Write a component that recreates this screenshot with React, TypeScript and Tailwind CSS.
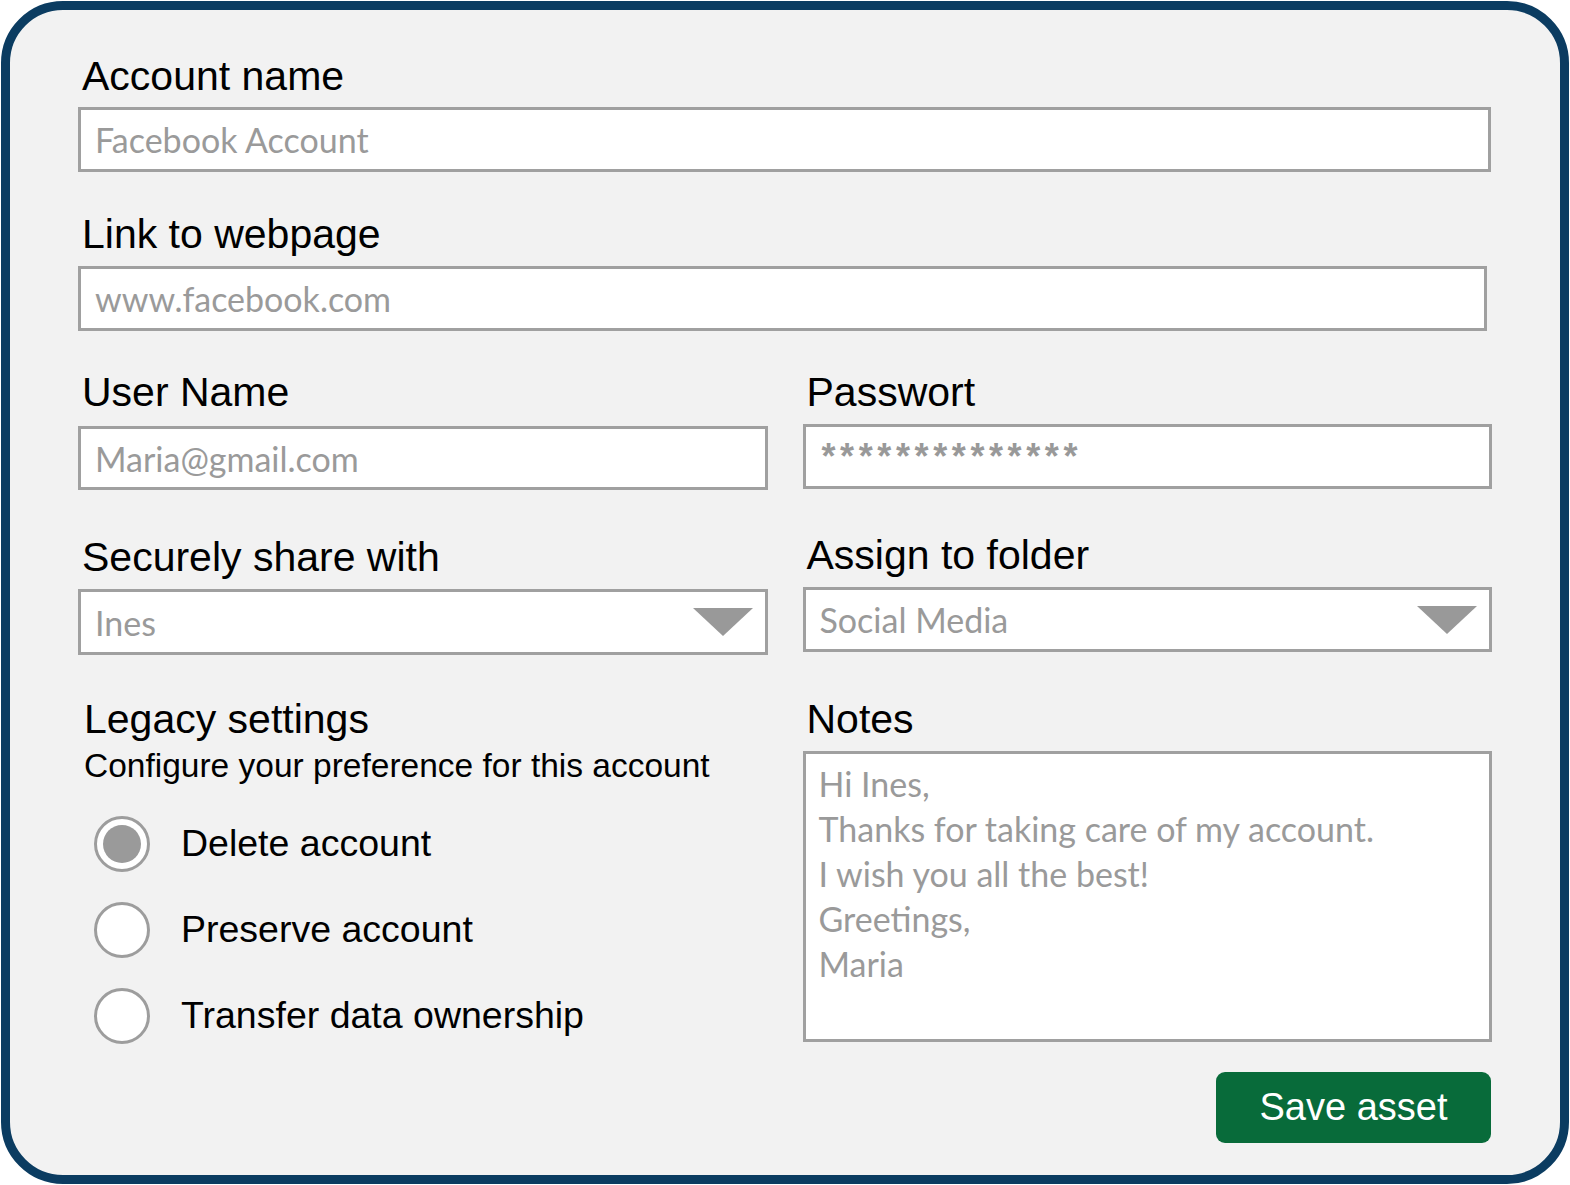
import React from "react";

const label = "block pl-[4px] text-[41px] leading-none text-black font-['Liberation_Sans',Arial,sans-serif]";
const box = "flex items-center border-[3px] border-[#a0a0a0] bg-white px-[14px] text-[34px] text-[#9a9a9a] font-['Lato','Noto_Sans',sans-serif]";

function Field({ title, value, className = "", boxClass = "" }: any) {
  return (
    <div className={className}>
      <span className={label}>{title}</span>
      <div className={`${box} ${boxClass}`}>{value}</div>
    </div>
  );
}

function Select({ title, value, className = "", boxClass = "" }: any) {
  return (
    <div className={className}>
      <span className={label}>{title}</span>
      <div className={`${box} justify-between pr-[12px] ${boxClass}`}>
        <span>{value}</span>
        <svg width="60" height="28" viewBox="0 0 60 28">
          <polygon points="0,0 60,0 30,28" fill="#999999" />
        </svg>
      </div>
    </div>
  );
}

function Radio({ text, checked = false }: any) {
  return (
    <div className="flex items-center gap-[31px] h-[56px]">
      <div className="w-[56px] h-[56px] rounded-full border-[3px] border-[#9d9d9d] bg-white flex items-center justify-center">
        {checked && <div className="w-[38px] h-[38px] rounded-full bg-[#9a9a9a]" />}
      </div>
      <span className="text-[37.5px] leading-none text-black font-['Liberation_Sans',Arial,sans-serif]">{text}</span>
    </div>
  );
}

export default function App() {
  const notes = ["Hi Ines,", "Thanks for taking care of my account.", "I wish you all the best!", "Greetings,", "Maria"];
  return (
    <div className="w-[1570px] h-[1185px] bg-white p-[1px]">
      <div className="w-[1568px] h-[1183px] rounded-[62px] border-[9px] border-[#0b3c61] bg-[#f2f2f2] pl-[68px] pr-[68px] pt-[46px]">
        <Field title="Account name" value="Facebook Account" boxClass="mt-[10px] h-[65px] w-[1413px]" />
        <Field title="Link to webpage" value="www.facebook.com" className="mt-[42px]" boxClass="mt-[11px] h-[65px] w-[1409px]" />

        <div className="mt-[41px] grid grid-cols-2 gap-[35px]">
          <Field title="User Name" value="Maria@gmail.com" boxClass="mt-[13px] h-[64px]" />
          <div>
            <span className={label}>Passwort</span>
            <div className="mt-[11px] h-[65px] border-[3px] border-[#a0a0a0] bg-white pl-[16px] pt-[12px] text-[36px] leading-none font-bold tracking-[4.6px] text-[#999999] font-['Liberation_Sans',Arial,sans-serif]">
              **************
            </div>
          </div>
        </div>

        <div className="mt-[47px] grid grid-cols-2 gap-[35px]">
          <Select title="Securely share with" value="Ines" boxClass="mt-[11px] h-[66px]" />
          <Select title="Assign to folder" value="Social Media" className="-mt-[2px]" boxClass="mt-[11px] h-[65px]" />
        </div>

        <div className="mt-[44px] grid grid-cols-2 gap-[35px]">
          <div className="pl-[2px]">
            <span className={label}>Legacy settings</span>
            <p className="mt-[9px] pl-[4px] text-[33.5px] leading-none text-black font-['Liberation_Sans',Arial,sans-serif]">
              Configure your preference for this account
            </p>
            <div className="mt-[33px] pl-[14px] flex flex-col gap-[30px]">
              <Radio text="Delete account" checked />
              <Radio text="Preserve account" />
              <Radio text="Transfer data ownership" />
            </div>
          </div>
          <div>
            <span className={label}>Notes</span>
            <div className="mt-[11px] h-[291px] border-[3px] border-[#a0a0a0] bg-white px-[13px] pt-[7px] text-[34px] leading-[45px] text-[#9a9a9a] font-['Lato','Noto_Sans',sans-serif]">
              {notes.map(n => (
                <div key={n}>{n}</div>
              ))}
            </div>
            <div className="mt-[30px] flex justify-end pr-[1px]">
              <button className="w-[275px] h-[71px] rounded-[9px] bg-[#086b3a] text-white text-[38px] font-['Liberation_Sans',Arial,sans-serif]">
                Save asset
              </button>
            </div>
          </div>
        </div>
      </div>
    </div>
  );
}
